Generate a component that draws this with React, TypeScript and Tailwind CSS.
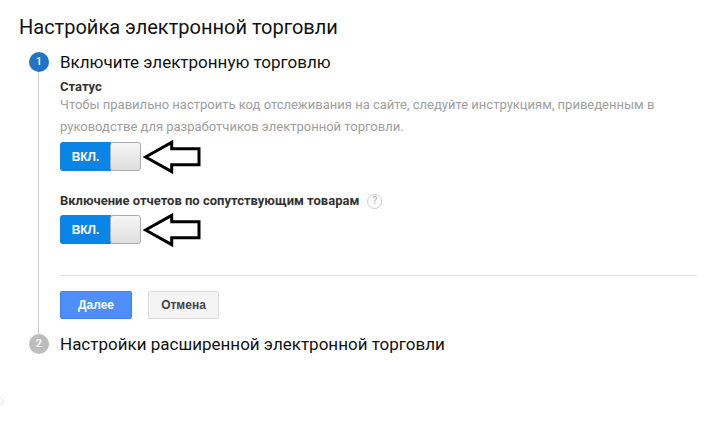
import React from 'react';

function Toggle() {
  return (
    <div className="flex h-[29px] items-center">
      <div className="flex h-[29px] w-[81px]">
        <div className="flex w-[51px] items-center justify-center rounded-l-[3px] bg-[#0a84e6] text-[12px] font-bold text-white [font-family:'Liberation_Sans',Arial,sans-serif]">
          ВКЛ.
        </div>
        <div className="-ml-px w-[31px] rounded-[3px] border border-[#ababab] bg-gradient-to-b from-[#f6f6f6] to-[#dedede]" />
      </div>
      <svg width="60" height="36" viewBox="0 0 60 36" className="ml-[2px] shrink-0">
        <polygon
          points="2.5,18 28.7,3.4 28.7,9.8 56,9.8 56,25.8 28.7,25.8 28.7,32.6"
          fill="white"
          stroke="black"
          strokeWidth="3"
          strokeLinejoin="miter"
        />
      </svg>
    </div>
  );
}

export default function App() {
  return (
    <div className="relative h-[428px] w-[725px] overflow-hidden bg-white text-[#212121] [font-family:Roboto,'Noto_Sans',sans-serif]">
      <h1 className="pl-[19px] pt-[13px] text-[20px] leading-[28px] font-normal text-[#111]">
        Настройка электронной торговли
      </h1>

      <div className="mt-[11px]">
        {/* Step 1 */}
        <div className="flex">
          <div className="flex w-[60px] shrink-0 flex-col">
            <div className="ml-[29px] flex h-[20px] w-[20px] items-center justify-center rounded-full bg-[#1f74c8] text-[11px] font-medium text-white">
              1
            </div>
            <div className="ml-[38px] w-px flex-1 bg-[#cfcfcf]" />
          </div>
          <div className="flex-1 pb-[15px] pr-[28px]">
            <h2 className="text-[17px] leading-[20px] font-normal text-[#111]">Включите электронную торговлю</h2>
            <div className="mt-[8px] text-[13px] leading-[14px] font-bold text-[#333]">Статус</div>
            <p className="text-[13px] leading-[22px] text-[#9e9e9e]">
              Чтобы правильно настроить код отслеживания на сайте, следуйте инструкциям, приведенным в
              <br />
              руководстве для разработчиков электронной торговли.
            </p>
            <div className="mt-[4px]">
              <Toggle />
            </div>

            <div className="mt-[22px] flex items-center text-[13px] leading-[16px] font-bold text-[#333]">
              Включение отчетов по сопутствующим товарам
              <span className="ml-[8px] flex h-[15px] w-[15px] items-center justify-center rounded-full border border-[#cccccc] text-[10px] font-normal text-[#aaa]">
                ?
              </span>
            </div>
            <div className="mt-[6px]">
              <Toggle />
            </div>

            <div className="mt-[31px] h-px bg-[#e3e3e3]" />

            <div className="mt-[15px] flex gap-[16px] [font-family:'Liberation_Sans',Arial,sans-serif]">
              <button className="h-[28px] w-[72px] rounded-[2px] border border-[#3b82f0] bg-[#4d8ff7] text-[12px] font-bold text-white">
                Далее
              </button>
              <button className="h-[28px] w-[71px] rounded-[2px] border border-[#dcdcdc] bg-[#f4f4f4] text-[12px] font-bold text-[#444]">
                Отмена
              </button>
            </div>
          </div>
        </div>

        {/* Step 2 */}
        <div className="flex">
          <div className="w-[60px] shrink-0">
            <div className="ml-[29px] flex h-[20px] w-[20px] items-center justify-center rounded-full bg-[#bdbdbd] text-[11px] font-medium text-white">
              2
            </div>
          </div>
          <h2 className="text-[17px] leading-[20px] font-normal text-[#111]">
            Настройки расширенной электронной торговли
          </h2>
        </div>
      </div>

      <div className="absolute left-[-6px] top-[397px] h-[9px] w-[9px] rotate-45 border border-[#e6e6e6]" />
    </div>
  );
}
